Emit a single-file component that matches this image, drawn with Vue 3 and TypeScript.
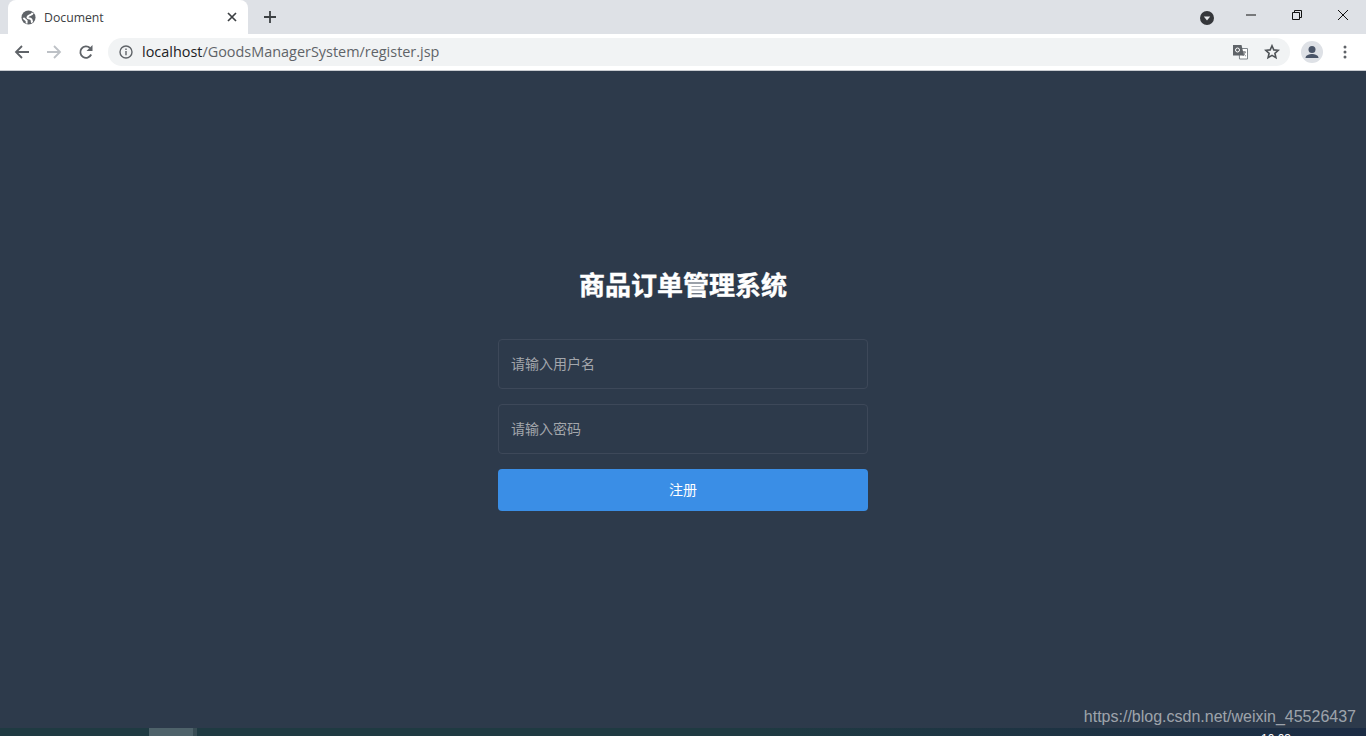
<template>
  <div class="page">
    <header class="browser">
      <div class="tab-strip">
        <div class="tab">
          <svg class="favicon" viewBox="0 0 16 16">
            <circle cx="8" cy="8" r="7.5" fill="#5f6368" />
            <path d="M12.500 3C11.500 6 8 5 7 7.500 6.500 9 9 9 10.500 9.500 12 10 11 12 12 13.500" stroke="#fff" stroke-width="2.200" fill="none" />
            <path d="M2.500 8.500L6 11.500V14.500" stroke="#fff" stroke-width="2" fill="none" />
          </svg>
          <span class="tab-title">Document</span>
          <svg class="tab-close" viewBox="0 0 10 10">
            <path d="M1 1l8 8M9 1l-8 8" stroke="#3c4043" stroke-width="1.700" fill="none" />
          </svg>
        </div>
        <svg class="new-tab" viewBox="0 0 12 12">
          <path d="M6 0v12M0 6h12" stroke="#3c4043" stroke-width="1.800" fill="none" />
        </svg>
        <div class="window-controls">
          <svg class="tab-search" viewBox="0 0 14 14">
            <circle cx="7" cy="7" r="7" fill="#35373b" />
            <path d="M3.800 5.600h6.400L7 9.400z" fill="#e8eaed" />
          </svg>
          <span class="win-btn">
            <svg viewBox="0 0 10 10" width="10" height="10"><path d="M0 5h10" stroke="#111" fill="none" /></svg>
          </span>
          <span class="win-btn">
            <svg viewBox="0 0 10 10" width="10" height="10">
              <path d="M.5 2.500h7v7h-7zM2.500 2.500v-2h7v7h-2" stroke="#111" fill="none" />
            </svg>
          </span>
          <span class="win-btn">
            <svg viewBox="0 0 10 10" width="10" height="10"><path d="M0 0l10 10M10 0L0 10" stroke="#111" fill="none" /></svg>
          </span>
        </div>
      </div>
      <div class="toolbar">
        <svg class="nav-icon" viewBox="0 0 16 16">
          <path d="M15 8H2M8 2L2 8l6 6" stroke="#5f6368" stroke-width="1.800" fill="none" />
        </svg>
        <svg class="nav-icon" viewBox="0 0 16 16">
          <path d="M1 8h13M8 2l6 6-6 6" stroke="#bdc1c6" stroke-width="1.800" fill="none" />
        </svg>
        <svg class="nav-icon" viewBox="0 0 16 16">
          <path d="M13.200 10.500A5.700 5.700 0 1 1 12 4" stroke="#5f6368" stroke-width="1.800" fill="none" />
          <path d="M14.500 1v6h-6z" fill="#5f6368" />
        </svg>
        <div class="omnibox">
          <svg class="info-icon" viewBox="0 0 14 14">
            <circle cx="7" cy="7" r="6" stroke="#5f6368" stroke-width="1.400" fill="none" />
            <path d="M7 6v4.200M7 3.600v1.400" stroke="#5f6368" stroke-width="1.400" fill="none" />
          </svg>
          <span class="url"><span class="host">localhost</span>/GoodsManagerSystem/register.jsp</span>
          <svg class="translate-icon" viewBox="0 0 16 16">
            <path d="M7 4.500h8.500V15H7.500z" fill="#fff" stroke="#80868b" />
            <path d="M1 1h8.500l2.500 10.500H1z" fill="#5f6368" />
            <circle cx="5.500" cy="6" r="2" stroke="#fff" fill="none" />
            <path d="M10 8h4M12 7v1M10.800 8c.5 2 2 3.500 3 4M13.200 8c-.5 2-1.500 3-2.500 4" stroke="#5f6368" stroke-width=".8" fill="none" />
          </svg>
          <svg class="star-icon" viewBox="0 0 16 16">
            <path d="M8 1.800l1.800 4.100 4.500.4-3.400 3 1 4.400L8 11.400l-3.900 2.300 1-4.400-3.400-3 4.500-.4z" stroke="#4f5357" stroke-width="1.600" fill="none" />
          </svg>
        </div>
        <span class="avatar">
          <svg viewBox="0 0 22 22" width="22" height="22">
            <circle cx="11" cy="8.500" r="3.500" fill="#4a5568" />
            <path d="M4.500 17c0-3 4-4 6.500-4s6.500 1 6.500 4z" fill="#4a5568" />
          </svg>
        </span>
        <svg class="menu-icon" viewBox="0 0 4 16">
          <circle cx="2" cy="3" r="1.500" fill="#5f6368" />
          <circle cx="2" cy="8" r="1.500" fill="#5f6368" />
          <circle cx="2" cy="13" r="1.500" fill="#5f6368" />
        </svg>
      </div>
    </header>

    <main class="content">
      <form class="register-form" @submit.prevent>
        <h3 class="title">商品订单管理系统</h3>
        <input v-model="username" class="field" type="text" placeholder="请输入用户名" />
        <input v-model="password" class="field" type="password" placeholder="请输入密码" />
        <button class="submit" type="submit">注册</button>
      </form>
    </main>

    <div class="taskbar">
      <span class="task-active"></span>
      <span class="task-edge"></span>
      <span class="task-clock">10:03</span>
    </div>
    <span class="watermark">https://blog.csdn.net/weixin_45526437</span>
  </div>
</template>

<script setup lang="ts">
  import { ref } from 'vue';

  const username = ref('');
  const password = ref('');
</script>

<style>
  html,
  body {
    margin: 0;
    height: 100%;
    overflow: hidden;
  }
</style>

<style scoped>
  .page {
    position: relative;
    display: flex;
    flex-direction: column;
    height: 736px;
    overflow: hidden;
    background: #2d3a4b;
    font-family: 'Liberation Sans', 'Noto Sans CJK SC', sans-serif;
  }

  .tab-strip {
    display: flex;
    align-items: center;
    height: 34px;
    padding-left: 8px;
    background: #dee1e6;
  }

  .tab {
    display: flex;
    align-items: center;
    width: 240px;
    height: 34px;
    box-sizing: border-box;
    padding: 0 11px 0 13px;
    background: #fff;
    border-radius: 8px 8px 0 0;
  }

  .favicon {
    width: 15px;
    height: 15px;
    flex-shrink: 0;
  }

  .tab-title {
    flex: 1;
    margin-left: 8px;
    font-family: 'Open Sans', sans-serif;
    font-size: 12.250px;
    color: #3c4043;
  }

  .tab-close {
    width: 10px;
    height: 10px;
  }

  .new-tab {
    width: 12px;
    height: 12px;
    margin-left: 16px;
  }

  .window-controls {
    display: flex;
    align-items: center;
    margin-left: auto;
  }

  .tab-search {
    width: 14px;
    height: 14px;
    margin-right: 14px;
    margin-top: 2px;
  }

  .win-btn {
    display: flex;
    justify-content: center;
    width: 46px;
    margin-top: -4px;
  }

  .toolbar {
    display: flex;
    align-items: center;
    height: 36px;
    padding-left: 14px;
    background: #fff;
    border-bottom: 1px solid #c8cbd0;
  }

  .nav-icon {
    width: 16px;
    height: 16px;
    margin-right: 16px;
  }

  .omnibox {
    display: flex;
    align-items: center;
    width: 1182px;
    height: 28px;
    margin-left: -2px;
    box-sizing: border-box;
    padding: 0 10px 0 11px;
    background: #f1f3f4;
    border-radius: 14px;
  }

  .info-icon {
    width: 14px;
    height: 14px;
    flex-shrink: 0;
  }

  .url {
    flex: 1;
    margin-left: 9px;
    padding-bottom: 2px;
    font-family: 'Open Sans', sans-serif;
    font-size: 14.430px;
    color: #5f6368;
    white-space: nowrap;
  }

  .host {
    color: #202124;
  }

  .translate-icon {
    width: 16px;
    height: 16px;
    margin-right: 16px;
  }

  .star-icon {
    width: 16px;
    height: 16px;
  }

  .avatar {
    display: flex;
    width: 22px;
    height: 22px;
    margin-left: 11px;
    border-radius: 50%;
    background: #dee1e6;
  }

  .menu-icon {
    width: 4px;
    height: 16px;
    margin-left: 20px;
  }

  .content {
    flex: 1;
    display: flex;
    justify-content: center;
  }

  .register-form {
    display: flex;
    flex-direction: column;
    width: 370px;
    padding-top: 198px;
  }

  .title {
    margin: 0 0 36px;
    font-size: 26px;
    line-height: 34px;
    font-weight: 700;
    text-align: center;
    color: #fff;
    -webkit-text-stroke: 0.4px #fff;
  }

  .field {
    height: 50px;
    box-sizing: border-box;
    margin-bottom: 15px;
    padding: 0 12px;
    background: transparent;
    border: 1px solid #3d4859;
    border-radius: 4px;
    outline: none;
    font-family: inherit;
    font-size: 14px;
    color: #fff;
  }

  .field::placeholder {
    color: #a3a6ab;
  }

  .submit {
    height: 42px;
    padding: 0 0 2px;
    background: #3a8ee6;
    border: none;
    border-radius: 4px;
    font-family: inherit;
    font-size: 14px;
    color: #fff;
  }

  .taskbar {
    position: absolute;
    left: 0;
    right: 0;
    bottom: 0;
    display: flex;
    height: 8px;
    overflow: hidden;
    padding-left: 149px;
    background: linear-gradient(90deg, #1f3a42 0%, #1f3a42 55%, #1c2c44 100%);
  }

  .task-active {
    width: 44px;
    background: #4e626a;
  }

  .task-edge {
    width: 4px;
    background: #384c54;
  }

  .task-clock {
    position: absolute;
    left: 1261px;
    top: 4px;
    font-size: 12px;
    line-height: 14px;
    color: #fff;
  }

  .watermark {
    position: absolute;
    right: 10px;
    bottom: 10px;
    font-size: 16px;
    line-height: 18px;
    color: rgba(255, 255, 255, 0.55);
  }
</style>
